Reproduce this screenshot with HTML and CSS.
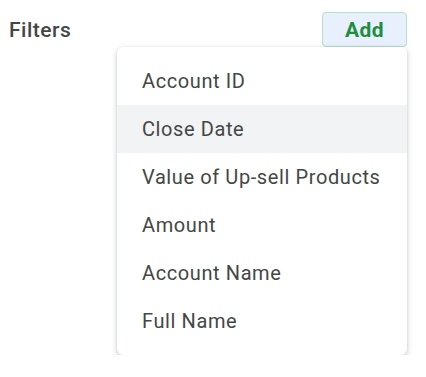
FILE: index.html
```html
<!DOCTYPE html>
<html lang="en">
<head>
    <meta charset="UTF-8">
    <title>Filters</title>
    <link rel="stylesheet" href="styles.css">
</head>
<body>
    <div class="filters-bar">
        <span class="filters-label">Filters</span>
        <div class="add-wrap">
            <button class="add-btn">Add</button>
            <ul class="menu">
                <li class="menu-item">Account ID</li>
                <li class="menu-item active">Close Date</li>
                <li class="menu-item">Value of Up-sell Products</li>
                <li class="menu-item">Amount</li>
                <li class="menu-item">Account Name</li>
                <li class="menu-item">Full Name</li>
            </ul>
        </div>
    </div>
</body>
</html>
```

FILE: styles.css
```css
body {
    margin: 0;
    background: #fff;
    font-family: Roboto, "Noto Sans", sans-serif;
}
.filters-bar {
    display: flex;
    justify-content: space-between;
    align-items: flex-start;
    padding: 12px 19px 0 9px;
}
.filters-label {
    font-size: 21px;
    font-weight: 500;
    letter-spacing: 0.5px;
    color: #444746;
    margin-top: 6px;
}
.add-wrap {
    display: flex;
    flex-direction: column;
    align-items: flex-end;
}
.add-btn {
    width: 85px;
    height: 35px;
    border: 1px solid #b7dfc3;
    border-radius: 4px;
    background: #e8f0fe;
    color: #1e8e3e;
    font-family: Roboto, sans-serif;
    font-size: 21px;
    font-weight: 700;
    letter-spacing: 0.4px;
    padding: 0;
}
.menu {
    width: 290px;
    margin: 0;
    padding: 10px 0;
    list-style: none;
    background: #fff;
    border-radius: 6px;
    box-shadow: 0 2px 6px rgba(60, 64, 67, 0.22), 0 1px 3px rgba(60, 64, 67, 0.12);
}
.menu-item {
    height: 48px;
    line-height: 48px;
    padding: 0 25px;
    font-size: 20px;
    letter-spacing: 0.6px;
    color: #444746;
    white-space: nowrap;
}
.menu-item.active {
    background: #f1f3f4;
}
```
